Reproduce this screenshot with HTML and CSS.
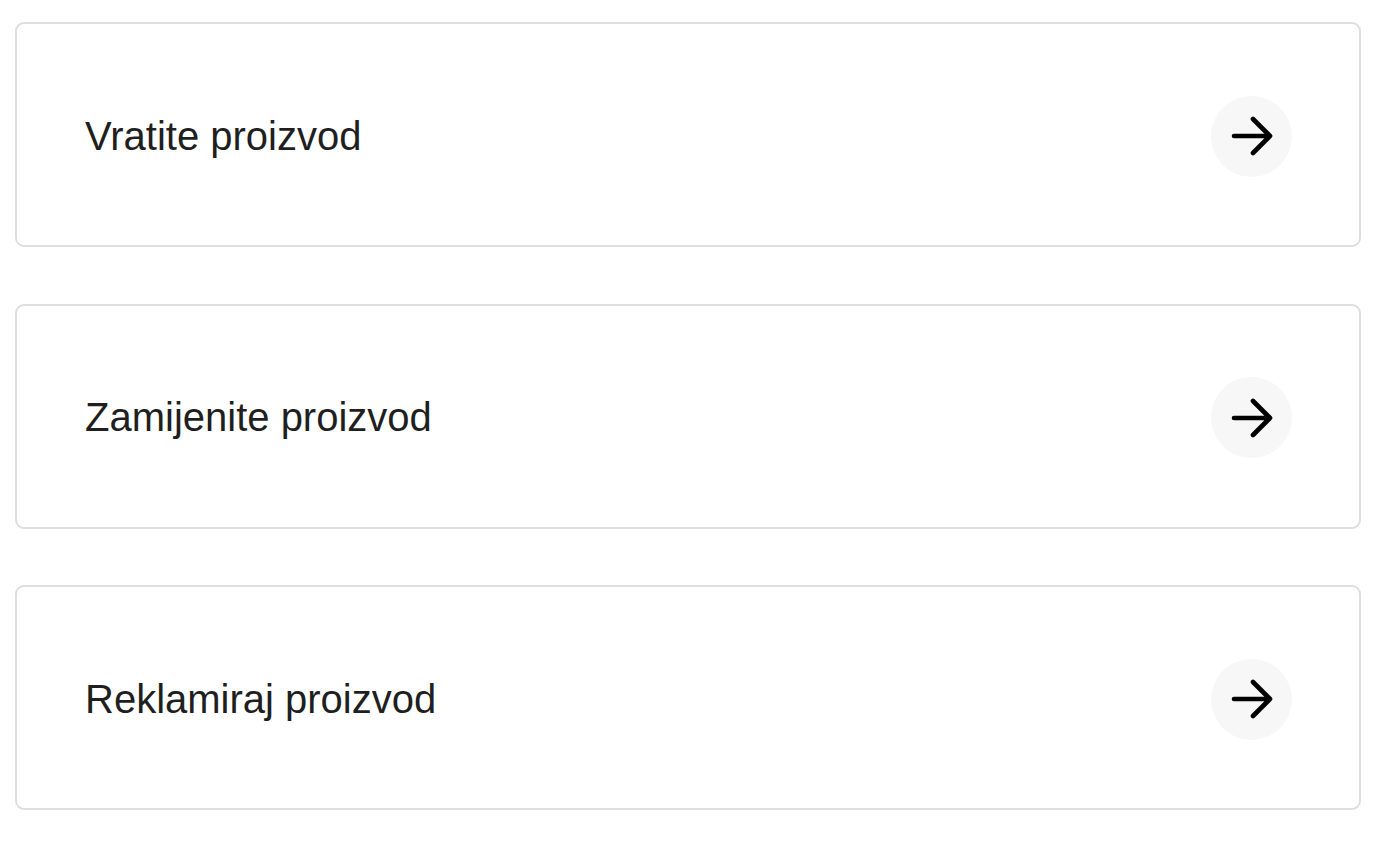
FILE: index.html
```html
<!DOCTYPE html>
<html>
  <head>
    <link rel="stylesheet" href="styles.css">
  </head>
  <body>
    <div class="options">
      <a class="option-card" href="#">
        <span class="option-title">Vratite proizvod</span>
        <span class="option-arrow">
          <svg width="44" height="40" viewBox="0 0 44 40"><path d="M4 20H40M23 3L40 20L23 37" /></svg>
        </span>
      </a>
      <a class="option-card" href="#">
        <span class="option-title">Zamijenite proizvod</span>
        <span class="option-arrow">
          <svg width="44" height="40" viewBox="0 0 44 40"><path d="M4 20H40M23 3L40 20L23 37" /></svg>
        </span>
      </a>
      <a class="option-card" href="#">
        <span class="option-title">Reklamiraj proizvod</span>
        <span class="option-arrow">
          <svg width="44" height="40" viewBox="0 0 44 40"><path d="M4 20H40M23 3L40 20L23 37" /></svg>
        </span>
      </a>
    </div>
  </body>
</html>
```

FILE: styles.css
```css
body {
  margin: 0;
  background: #fff;
  font-family: "Liberation Sans", Arial, sans-serif;
}
.options {
  display: flex;
  flex-direction: column;
  gap: 56.5px;
  padding: 22px 30px 0 15px;
}
.option-card {
  display: flex;
  align-items: center;
  justify-content: space-between;
  height: 225px;
  box-sizing: border-box;
  padding: 3px 67px 0 68px;
  border: 2px solid #dedede;
  border-radius: 9px;
  color: #1f1f1f;
  text-decoration: none;
}
.option-title {
  font-size: 40px;
}
.option-arrow {
  display: flex;
  align-items: center;
  justify-content: center;
  width: 81px;
  height: 81px;
  border-radius: 50%;
  background: #f7f7f7;
}
.option-arrow svg path {
  fill: none;
  stroke: #000;
  stroke-width: 4.6;
  stroke-linecap: round;
  stroke-linejoin: round;
}
```
